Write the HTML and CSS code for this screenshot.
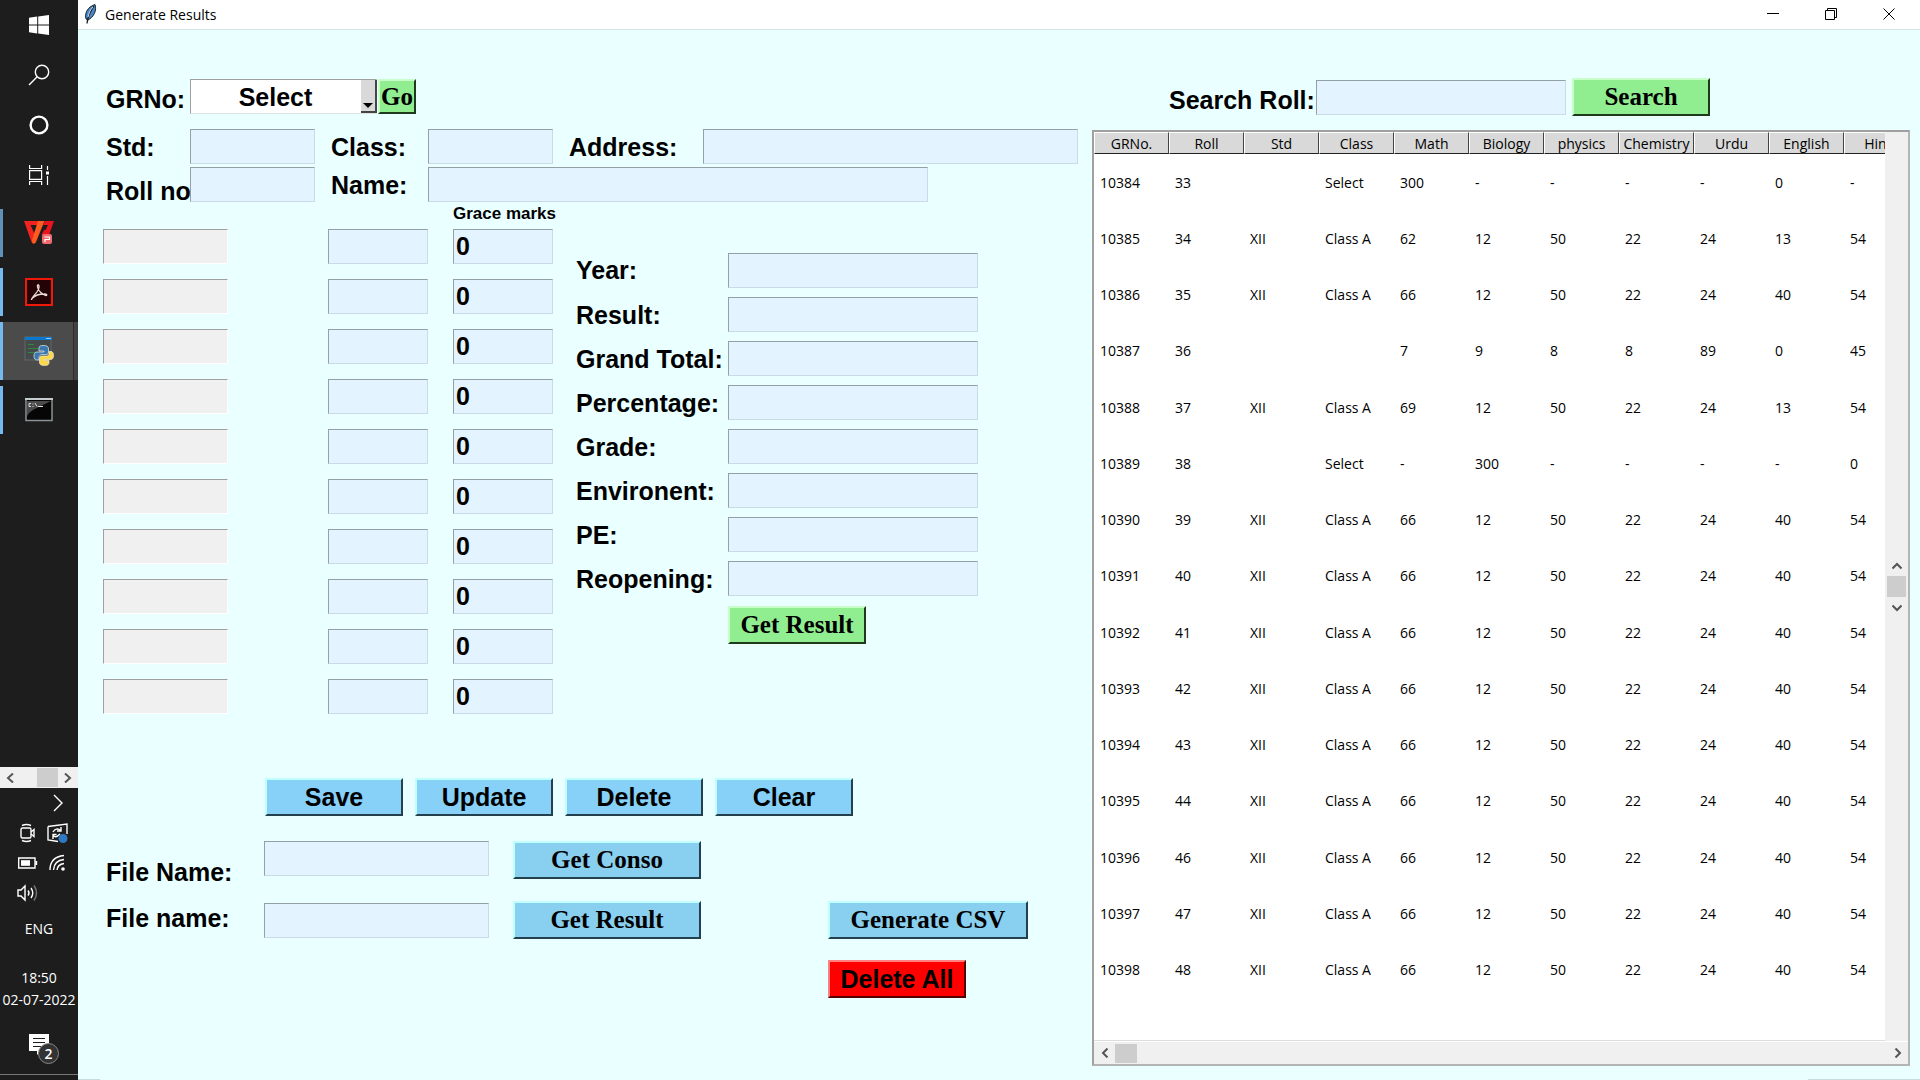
FILE: index.html
```html
<!DOCTYPE html>
<html lang="en">
<head>
<meta charset="utf-8">
<title>Generate Results</title>
<link rel="stylesheet" href="styles.css">
</head>
<body>
<nav class="taskbar" aria-label="Taskbar">
  <button class="task" aria-label="Start"><svg width="20" height="20" viewBox="0 0 20 20" fill="#fff"><path d="M0 2.8 8.2 1.6V9.5H0zM9.2 1.4 20 0V9.5H9.2zM0 10.5H8.2V18.4L0 17.2zM9.2 10.5H20V20L9.2 18.6z"/></svg></button>
  <button class="task" aria-label="Search"><svg width="22" height="22" viewBox="0 0 22 22" fill="none" stroke="#fff" stroke-width="1.4"><circle cx="14" cy="8" r="6.7"/><path d="M9.2 12.8 1 21"/></svg></button>
  <button class="task" aria-label="Cortana"><svg width="20" height="20" viewBox="0 0 20 20" fill="none" stroke="#fff" stroke-width="2.4"><circle cx="10" cy="10" r="8.4"/></svg></button>
  <button class="task" aria-label="Task view"><svg width="20" height="20" viewBox="0 0 20 20" fill="none" stroke="#fff" stroke-width="1.2"><path d="M.6 0V3.5H12.6V0M.6 20V16.5H12.6V20M.6 5.6H12.6V14.4H.6zM18.5 1V5M18.5 11V20"/><path d="M17 6.5H20V9.5H17z" fill="#fff" stroke="none"/></svg></button>
  <button class="task running first" aria-label="WPS PDF"><svg width="30" height="26" viewBox="0 0 30 26"><path d="M0 1H16L14 5H6.500L11 15 9 23.500Q8 23 7.500 22z" fill="#f3231f"/><path d="M21 1H30L25 15H17.500L20 10 21.500 10 24 5H19z" fill="#e8141e"/><path d="M14 1H20.500L12 22Q10.500 25 8.500 23L8 20z" fill="#ff5a1f"/><rect x="18" y="14" width="10" height="10" rx="2" fill="#ef6a6e"/><path d="M20.500 17H25.500V19.500H21V22" fill="none" stroke="#fff" stroke-width="1.2"/></svg></button>
  <button class="task running gap-l" aria-label="Adobe Acrobat"><svg width="28" height="28" viewBox="0 0 28 28"><rect x="1" y="1" width="26" height="26" fill="#250205" stroke="#f0180a" stroke-width="2"/><path d="M7 20.5C9 16 15 13 14 8 13.500 6 12 6.500 12.500 9 13 13 18 17 21 17.500 22.500 17.500 22 15.700 19 16 14.500 16 10 17.500 7.500 20 6 21.500 6.500 22 7 20.500Z" fill="none" stroke="#e8d8d8" stroke-width="1.300"/></svg></button>
  <button class="task running active" aria-label="Python"><svg width="30" height="30" viewBox="0 0 30 30"><rect x="1" y="1" width="26" height="23" fill="#454a4c" stroke="#62686a"/><path d="M1 1H28V4H1z" fill="#0a78d0"/><path d="M22 2.500H27" stroke="#9cc8ec"/><path d="M4 8.500H10M4 12.500H16M4 16.500H12" stroke="#2f8a35"/><path d="M19 9.500C15 9.500 15 11 15 13V15H20V16H13C10.500 16 10 18 10 20 10 22.500 11 24 13 24H15V21.500C15 19.500 16.500 18.500 18 18.500H22C24 18.500 24.500 17.500 24.500 16V13C24.500 10 22.500 9.500 19 9.500Z" fill="#3b78ad" stroke="#e8eef2" stroke-width=".7"/><path d="M20.500 29.500C24 29.500 25 28.500 25 26.500V24.500H20V23.500H26.500C28.500 23.500 29.500 22 29.500 19.500 29.500 17 28.500 15.500 27 15.500H25V17.500C25 19.500 24 20 22 20H18C16.500 20 15.500 21 15.500 22.500V26.500C15.500 28.500 17 29.500 20.500 29.500Z" fill="#fbd84a" stroke="#f3efd8" stroke-width=".7"/></svg></button>
  <button class="task running" aria-label="Command Prompt"><svg width="28" height="24" viewBox="0 0 28 24"><rect x="1" y="1" width="26" height="21.500" fill="#060606" stroke="#8b9296" stroke-width="1.500"/><path d="M2 3H26L16 8C9 11 5 13 2 18z" fill="#4a4a4a"/><path d="M0 1H28" stroke="#c4ccd0" stroke-width="2"/><path d="M6 5.500H4V8.500H6M8 5.500V6.500M8 8V9M10 5 12 8.500M13 8.500H18" fill="none" stroke="#ddd"/></svg></button>

  <div class="task-scroll">
    <button aria-label="Scroll left"><svg width="8" height="10" viewBox="0 0 8 10"><path d="M7 .5 2 5 7 9.500" /></svg></button>
    <span class="task-thumb"></span>
    <button aria-label="Scroll right"><svg width="8" height="10" viewBox="0 0 8 10"><path d="M1 .5 6 5 1 9.500" /></svg></button>
  </div>
  <div class="tray">
    <span></span>
    <svg width="20" height="18" viewBox="0 0 20 18"><path d="M6 1 14 9 6 17"/></svg>
    <svg width="20" height="20" viewBox="0 0 20 20"><rect x="3" y="5" width="10" height="10" rx="1.500"/><path d="M13 9 16 6.500V13.500L13 11M4 2.500Q8.500.5 13 2.500M4 17.500Q8.500 19.500 13 17.500"/></svg>
    <svg width="22" height="20" viewBox="0 0 22 20"><path d="M1 3.500 20 1V11M1 3.500V17L11 18.500M6 9Q9 4 14 7.500M14 4V8H10M13 11Q8 16 6 12M6 16V11.500H9.500"/><circle cx="16" cy="15.500" r="4.500" fill="#2f78c4" stroke="none"/></svg>
    <svg width="20" height="12" viewBox="0 0 20 12"><path d="M.7 1H17V11H.7zM18.500 4V8"/><path class="solid" d="M3 3.200H12V8.800H3z"/></svg>
    <svg width="20" height="18" viewBox="0 0 20 18"><path d="M2 16Q2 3 16 1.500M5.500 16Q6 6.500 16 5.500M9 16Q9.500 10.500 16 9.500"/><circle cx="15" cy="15" r="1.800" fill="#fff" stroke="none"/></svg>
    <svg width="22" height="18" viewBox="0 0 22 18"><path d="M1 6H4L8 2V16L4 12H1zM11 6.500Q13 9 11 11.500M14 4Q17.500 9 14 14"/><path class="dim" d="M17 1.500Q22 9 17 16.500"/></svg>
  </div>
  <span class="lang">ENG</span>
  <time class="clock"><span>18:50</span><span>02-07-2022</span></time>
  <button class="notice" aria-label="Notifications"><svg width="20" height="22" viewBox="0 0 20 22"><path d="M0 0H20V17H12L8 21V17H0z" fill="#fff"/><path d="M4 4.500H16M4 8.500H16M4 12.500H12" stroke="#1d1d1d"/></svg><span class="count">2</span></button>
</nav>

<div class="window">
  <header class="titlebar">
    <svg class="feather" width="14" height="20" viewBox="0 0 14 20"><path d="M2 15C.5 10 3 3 11 .5 13 6 10 13 4 16z" fill="#4a86c2" stroke="#1c2733"/><path d="M10 2C7 6 4 11 3 19.500" fill="none" stroke="#17202a" stroke-width="1.300"/><path d="M9 3C6 6 5 9 4 13" fill="none" stroke="#cfe2f2"/></svg>
    <h1>Generate Results</h1>
    <div class="controls">
      <button aria-label="Minimize"><svg width="12" height="12" viewBox="0 0 12 12"><path d="M0 5.500H12"/></svg></button>
      <button aria-label="Restore"><svg width="12" height="12" viewBox="0 0 12 12"><path d="M.5 2.500H9.500V11.500H.5zM2.500 2.500V.5H11.500V9.500H9.500"/></svg></button>
      <button aria-label="Close"><svg width="12" height="12" viewBox="0 0 12 12"><path d="M.5.5 11.500 11.500M11.500.5.5 11.500"/></svg></button>
    </div>
  </header>

  <main class="content">
    <form class="entry" onsubmit="return false">
      <div class="pick">
        <label for="grno">GRNo:</label>
        <span class="combo"><select id="grno"><option>Select</option></select><span class="combo-arrow"></span></span>
        <button class="btn green go">Go</button>
      </div>

      <div class="student">
        <label for="std">Std:</label><input id="std">
        <label for="class">Class:</label><input id="class">
        <label for="address">Address:</label><input id="address">
        <label for="roll" class="low">Roll no</label><input id="roll">
        <label for="name">Name:</label><input id="name" class="name">
      </div>

      <div class="scores">
        <div class="marks">
          <span class="grace">Grace marks</span>
          <input class="subject" aria-label="Subject 1" readonly><input aria-label="Marks 1"><input aria-label="Grace marks 1" value="0">
          <input class="subject" aria-label="Subject 2" readonly><input aria-label="Marks 2"><input aria-label="Grace marks 2" value="0">
          <input class="subject" aria-label="Subject 3" readonly><input aria-label="Marks 3"><input aria-label="Grace marks 3" value="0">
          <input class="subject" aria-label="Subject 4" readonly><input aria-label="Marks 4"><input aria-label="Grace marks 4" value="0">
          <input class="subject" aria-label="Subject 5" readonly><input aria-label="Marks 5"><input aria-label="Grace marks 5" value="0">
          <input class="subject" aria-label="Subject 6" readonly><input aria-label="Marks 6"><input aria-label="Grace marks 6" value="0">
          <input class="subject" aria-label="Subject 7" readonly><input aria-label="Marks 7"><input aria-label="Grace marks 7" value="0">
          <input class="subject" aria-label="Subject 8" readonly><input aria-label="Marks 8"><input aria-label="Grace marks 8" value="0">
          <input class="subject" aria-label="Subject 9" readonly><input aria-label="Marks 9"><input aria-label="Grace marks 9" value="0">
          <input class="subject" aria-label="Subject 10" readonly><input aria-label="Marks 10"><input aria-label="Grace marks 10" value="0">
        </div>
        <div class="results">
          <label for="year">Year:</label><input id="year">
          <label for="result">Result:</label><input id="result">
          <label for="total">Grand Total:</label><input id="total">
          <label for="percentage">Percentage:</label><input id="percentage">
          <label for="grade">Grade:</label><input id="grade">
          <label for="env">Environent:</label><input id="env">
          <label for="pe">PE:</label><input id="pe">
          <label for="reopening">Reopening:</label><input id="reopening">
          <button class="btn green serif">Get Result</button>
        </div>
      </div>

      <div class="actions">
        <button class="btn sky">Save</button>
        <button class="btn sky">Update</button>
        <button class="btn sky">Delete</button>
        <button class="btn sky">Clear</button>
      </div>

      <div class="files">
        <label for="file1" class="file-one">File Name:</label><input id="file1">
        <button class="btn blue serif">Get Conso</button>
        <label for="file2" class="file-two">File name:</label><input id="file2" class="file-two">
        <button class="btn blue serif">Get Result</button>
        <button class="btn blue serif csv">Generate CSV</button>
        <button class="btn red">Delete All</button>
      </div>
    </form>

    <section class="records">
      <form class="search" onsubmit="return false">
        <label for="search">Search Roll:</label><input id="search">
        <button class="btn green serif">Search</button>
      </form>
      <div class="frame">
        <div class="viewport">
          <table>
            <thead><tr><th>GRNo.</th><th>Roll</th><th>Std</th><th>Class</th><th>Math</th><th>Biology</th><th>physics</th><th>Chemistry</th><th>Urdu</th><th>English</th><th>Hindi</th></tr></thead>
            <tbody>
              <tr><td>10384</td><td>33</td><td></td><td>Select</td><td>300</td><td>-</td><td>-</td><td>-</td><td>-</td><td>0</td><td>-</td></tr>
              <tr><td>10385</td><td>34</td><td>XII</td><td>Class A</td><td>62</td><td>12</td><td>50</td><td>22</td><td>24</td><td>13</td><td>54</td></tr>
              <tr><td>10386</td><td>35</td><td>XII</td><td>Class A</td><td>66</td><td>12</td><td>50</td><td>22</td><td>24</td><td>40</td><td>54</td></tr>
              <tr><td>10387</td><td>36</td><td></td><td></td><td>7</td><td>9</td><td>8</td><td>8</td><td>89</td><td>0</td><td>45</td></tr>
              <tr><td>10388</td><td>37</td><td>XII</td><td>Class A</td><td>69</td><td>12</td><td>50</td><td>22</td><td>24</td><td>13</td><td>54</td></tr>
              <tr><td>10389</td><td>38</td><td></td><td>Select</td><td>-</td><td>300</td><td>-</td><td>-</td><td>-</td><td>-</td><td>0</td></tr>
              <tr><td>10390</td><td>39</td><td>XII</td><td>Class A</td><td>66</td><td>12</td><td>50</td><td>22</td><td>24</td><td>40</td><td>54</td></tr>
              <tr><td>10391</td><td>40</td><td>XII</td><td>Class A</td><td>66</td><td>12</td><td>50</td><td>22</td><td>24</td><td>40</td><td>54</td></tr>
              <tr><td>10392</td><td>41</td><td>XII</td><td>Class A</td><td>66</td><td>12</td><td>50</td><td>22</td><td>24</td><td>40</td><td>54</td></tr>
              <tr><td>10393</td><td>42</td><td>XII</td><td>Class A</td><td>66</td><td>12</td><td>50</td><td>22</td><td>24</td><td>40</td><td>54</td></tr>
              <tr><td>10394</td><td>43</td><td>XII</td><td>Class A</td><td>66</td><td>12</td><td>50</td><td>22</td><td>24</td><td>40</td><td>54</td></tr>
              <tr><td>10395</td><td>44</td><td>XII</td><td>Class A</td><td>66</td><td>12</td><td>50</td><td>22</td><td>24</td><td>40</td><td>54</td></tr>
              <tr><td>10396</td><td>46</td><td>XII</td><td>Class A</td><td>66</td><td>12</td><td>50</td><td>22</td><td>24</td><td>40</td><td>54</td></tr>
              <tr><td>10397</td><td>47</td><td>XII</td><td>Class A</td><td>66</td><td>12</td><td>50</td><td>22</td><td>24</td><td>40</td><td>54</td></tr>
              <tr><td>10398</td><td>48</td><td>XII</td><td>Class A</td><td>66</td><td>12</td><td>50</td><td>22</td><td>24</td><td>40</td><td>54</td></tr>
            </tbody>
          </table>
        </div>
        <div class="vscroll">
          <button aria-label="Scroll up"><svg width="10" height="8" viewBox="0 0 10 8"><path d="M.5 6.500 5 2 9.500 6.500"/></svg></button>
          <span class="thumb"></span>
          <button aria-label="Scroll down"><svg width="10" height="8" viewBox="0 0 10 8"><path d="M.5 1.500 5 6 9.500 1.500"/></svg></button>
        </div>
        <div class="hscroll">
          <button aria-label="Scroll left"><svg width="8" height="10" viewBox="0 0 8 10"><path d="M6.500.5 2 5 6.500 9.500"/></svg></button>
          <span class="thumb"></span>
          <button class="to-end" aria-label="Scroll right"><svg width="8" height="10" viewBox="0 0 8 10"><path d="M1.500.5 6 5 1.500 9.500"/></svg></button>
        </div>
      </div>
    </section>
  </main>
  <footer class="edge"><span class="edge-start"></span><span class="edge-end"></span></footer>
</div>
</body>
</html>
```
FILE: styles.css
```css
* { box-sizing: border-box; }
body {
  margin: 0;
  min-height: 100vh;
  display: grid;
  grid-template-columns: 78px 1fr;
  font-family: "Open Sans", "Noto Sans", sans-serif;
  font-size: 14px;
  color: #000;
}
button { font: inherit; color: inherit; padding: 0; border: 0; background: none; }
svg { display: block; }

/* Taskbar */
.taskbar {
  display: flex;
  flex-direction: column;
  background: #1d1d1d;
  color: #fff;
}
.task { height: 50px; display: flex; align-items: center; justify-content: center; flex: none; }
.running { height: 48px; border-left: 3px solid #76b9ed; padding-right: 3px; margin-top: 6px; }
.running.first { margin-top: 9px; border-color: #5f92ba; }
.running.gap-l { margin-top: 11px; }
.running.active { height: 58px; background: linear-gradient(90deg, #4b4b4b 70px, #2c2c2c 70px, #2c2c2c 71px, #424242 71px); }
.task-scroll {
  height: 21px;
  margin-top: auto;
  display: flex;
  align-items: center;
  justify-content: space-between;
  padding: 1px 6px;
  background: #f0f0f0;
}
.task-scroll path, .vscroll path, .hscroll path { fill: none; stroke: #555; stroke-width: 2; }
.task-thumb { width: 21px; height: 19px; margin-left: 16px; background: #cdcdcd; }
.tray {
  display: grid;
  grid-template-columns: 30px 30px;
  grid-auto-rows: 30px;
  padding: 0 5px 0 13px;
  place-items: center;
}
.tray path, .tray rect { fill: none; stroke: #fff; stroke-width: 1.400; }
.tray .solid { fill: #fff; stroke: none; }
.tray .dim { stroke: #777; }
.lang { line-height: 20px; margin-top: 11px; text-align: center; }
.clock { display: flex; flex-direction: column; align-items: center; line-height: 22px; margin-top: 28px; }
.notice {
  position: relative;
  height: 64px;
  padding: 23px 29px;
  border-bottom: 1px solid #777;
  margin-bottom: 5px;
}
.count {
  position: absolute;
  left: 38px;
  top: 32px;
  width: 21px;
  height: 21px;
  border: 1px solid #888;
  border-radius: 50%;
  background: #333;
  font-weight: 600;
  line-height: 19px;
}

/* Window */
.window { display: flex; flex-direction: column; min-width: 0; background: #eaffff; }
.titlebar {
  height: 30px;
  display: flex;
  align-items: center;
  gap: 7px;
  padding: 0 2px 1px 6px;
  background: #fff;
  border-bottom: 1px solid #d0e4e4;
}
.titlebar h1 { margin: 0; font-size: 14px; font-weight: 400; }
.controls { display: flex; margin-left: auto; height: 100%; }
.controls button { width: 58px; display: grid; place-items: center; }
.controls path { fill: none; stroke: #000; }

.content { flex: 1; display: flex; gap: 14px; padding: 0 10px 13px 25px; }
.entry, .search { font: bold 25px/30px "Liberation Sans", Arial, sans-serif; }
.entry { flex: none; }
input {
  width: 100%;
  height: 35px;
  padding: 0 2px;
  border: 1px solid;
  border-color: #93a0a5 #c8dbe6 #c8dbe6 #93a0a5;
  border-radius: 0;
  background: #e3f3ff;
  font: inherit;
  color: #000;
}
.subject { background: #f0f0f0; border-color: #a0a0a0 #fff #fff #a0a0a0; }

.btn {
  width: 138px;
  height: 38px;
  border: 2px solid;
  border-color: #c0ffff #24404c #24404c #c0ffff;
}
.serif, .go { font: bold 25px/30px "Liberation Serif", "Times New Roman", serif; }
.green { background: #90ee90; border-color: #c8ffc8 #1d3a1d #1d3a1d #c8ffc8; }
.sky { background: #87d1f8; }
.blue { background: #89cff0; width: 188px; }
.red { background: #f00; border-color: #ff8080 #500 #500 #ff8080; }

.pick { display: flex; align-items: flex-end; margin-top: 49px; padding-left: 3px; }
.pick label { width: 84px; }
.combo { position: relative; width: 187px; height: 35px; }
.combo select {
  width: 100%;
  height: 100%;
  appearance: none;
  border: 1px solid;
  border-color: #a0a0a0 #e0e0e0 #e0e0e0 #a0a0a0;
  border-radius: 0;
  padding: 0 16px 0 0;
  background: #fff;
  font: inherit;
  color: #000;
  text-align-last: center;
}
.combo-arrow {
  position: absolute;
  right: 0;
  top: 1px;
  bottom: 1px;
  width: 16px;
  display: grid;
  place-items: end center;
  padding-bottom: 3px;
  background: #d9d9d9;
  border-right: 2px solid #444;
  border-bottom: 2px solid #444;
  pointer-events: none;
}
.combo-arrow::after { content: ""; border: 5px solid transparent; border-top-color: #000; border-bottom: 0; }
.go { width: 38px; height: 35px; margin-left: 1px; }

.student {
  display: grid;
  grid-template-columns: 84px 125px 113px 125px 150px 375px;
  row-gap: 3px;
  margin-top: 15px;
  padding-left: 3px;
  align-items: center;
}
.student label { white-space: nowrap; }
.student label:nth-of-type(n+2) { padding-left: 16px; }
.student label.low { padding: 13px 0 0; line-height: 22px; }
.student .name { grid-column: 4 / span 3; width: 500px; }

.scores { display: flex; gap: 23px; margin-top: 1px; }
.marks { display: grid; grid-template-columns: 225px 125px 100px; grid-template-rows: 26px; grid-auto-rows: 50px; }
.marks input { width: 100px; }
.marks .subject { width: 125px; }
.grace { grid-column: 3; font-size: 17px; line-height: 22px; white-space: nowrap; }
.results {
  display: grid;
  grid-template-columns: 152px 250px;
  grid-template-rows: 36px;
  grid-auto-rows: 35px;
  row-gap: 9px;
  padding-top: 49px;
  align-items: center;
  align-content: start;
}
.results .btn { grid-column: 2; margin-top: 5px; }

.actions { display: flex; gap: 12px; margin-top: 49px; padding-left: 162px; }

.files {
  display: grid;
  grid-template-columns: 161px 249px 315px 200px;
  grid-template-rows: 60px 59px 38px;
  margin-top: 25px;
  align-items: start;
}
.files label { padding-left: 3px; }
.files input { width: 225px; }
.file-one { margin-top: 16px; }
.file-two { margin-top: 2px; }
.files .csv { width: 200px; }
.files .red { grid-column: 4; }
.files label.file-two { grid-column: 1; }

/* Records */
.records { flex: 1; min-width: 0; display: flex; flex-direction: column; }
.search { display: flex; align-items: center; margin-top: 48px; padding-left: 77px; }
.search label { width: 147px; flex: none; padding-top: 6px; }
.search input { width: 250px; margin-right: 6px; }
.frame {
  flex: 1;
  margin-top: 14px;
  display: grid;
  grid-template-columns: minmax(0, 1fr) 23px;
  grid-template-rows: 1fr 23px;
  border: 2px solid;
  border-color: #a0a0a0 #b4b4b4 #b4b4b4 #a0a0a0;
  background: #f0f0f0;
}
.viewport { overflow: hidden; background: #fff; border-bottom: 1px solid #ddd; }
table { width: 825px; table-layout: fixed; border-collapse: separate; border-spacing: 0; }
th {
  height: 22px;
  padding: 0;
  font-weight: 400;
  line-height: 19px;
  background: #d9d9d9;
  border-top: 1px solid #fff;
  border-left: 1px solid #fff;
  border-right: 1px solid #444;
  border-bottom: 1px solid #222;
}
td { height: 56px; padding: 0 6px; white-space: nowrap; }
tr:nth-child(4n) td { height: 57px; }
.vscroll { display: flex; flex-direction: column; align-items: center; justify-content: center; }
.vscroll button, .hscroll button { width: 21px; height: 21px; display: grid; place-items: center; }
.thumb { width: 19px; height: 21px; background: #cdcdcd; }
.hscroll { grid-column: 1 / -1; display: flex; align-items: center; border-top: 1px solid #fff; }
.hscroll .thumb { width: 22px; height: 19px; }
.to-end { margin-left: auto; }

.edge { height: 1px; display: flex; justify-content: space-between; }
.edge-start { width: 22px; background: #c8dcdc; }
.edge-end { width: 112px; background: #c8dcdc; }
```
